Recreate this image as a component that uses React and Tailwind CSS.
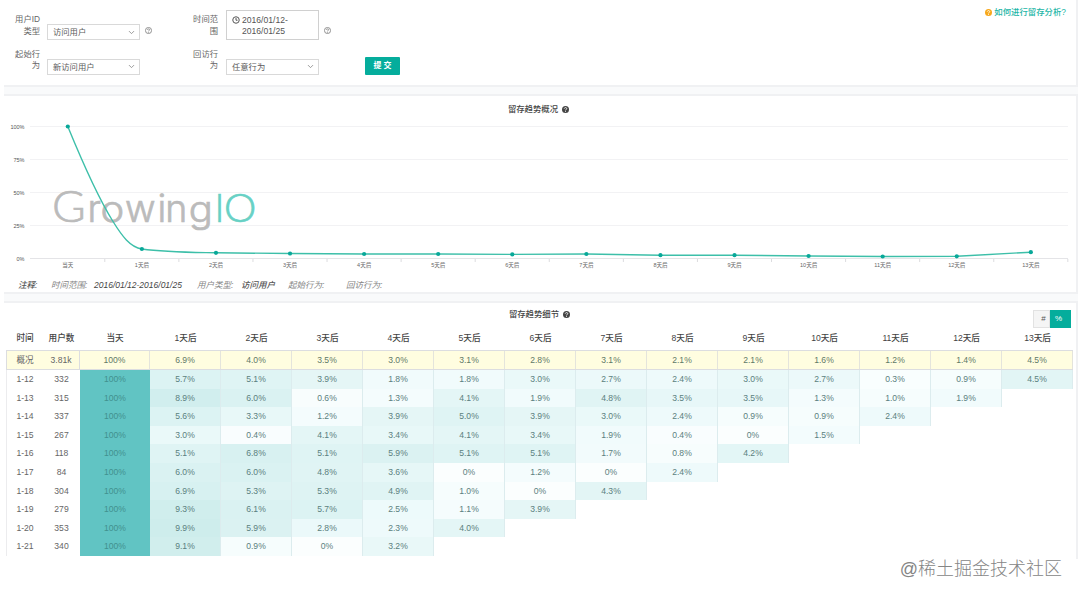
import React from "react";
import { ChevronDown } from "lucide-react";

const COLUMNS = ["当天", ...Array.from({ length: 13 }, (_, i) => `${i + 1}天后`)];

const OVERVIEW = ["100%", "6.9%", "4.0%", "3.5%", "3.0%", "3.1%", "2.8%", "3.1%", "2.1%", "2.1%", "1.6%", "1.2%", "1.4%", "4.5%"];

const ROWS = [
  ["1-12", "332", [5.7, 5.1, 3.9, 1.8, 1.8, 3.0, 2.7, 2.4, 3.0, 2.7, 0.3, 0.9, 4.5]],
  ["1-13", "315", [8.9, 6.0, 0.6, 1.3, 4.1, 1.9, 4.8, 3.5, 3.5, 1.3, 1.0, 1.9]],
  ["1-14", "337", [5.6, 3.3, 1.2, 3.9, 5.0, 3.9, 3.0, 2.4, 0.9, 0.9, 2.4]],
  ["1-15", "267", [3.0, 0.4, 4.1, 3.4, 4.1, 3.4, 1.9, 0.4, 0, 1.5]],
  ["1-16", "118", [5.1, 6.8, 5.1, 5.9, 5.1, 5.1, 1.7, 0.8, 4.2]],
  ["1-17", "84", [6.0, 6.0, 4.8, 3.6, 0, 1.2, 0, 2.4]],
  ["1-18", "304", [6.9, 5.3, 5.3, 4.9, 1.0, 0, 4.3]],
  ["1-19", "279", [9.3, 6.1, 5.7, 2.5, 1.1, 3.9]],
  ["1-20", "353", [9.9, 5.9, 2.8, 2.3, 4.0]],
  ["1-21", "340", [9.1, 0.9, 0, 3.2]],
];

const GRID = "grid grid-cols-[36px_37px_70px_repeat(13,71px)]";

const POINT_Y = [126.5, 249, 252.8, 253.5, 254, 254, 254.4, 254, 255.2, 255.2, 256, 256.5, 256.3, 252.2];
const pointX = (i) => 67.8 + i * 74.08;

function shade(v) {
  const stops = [[0, [251, 254, 254]], [2, [240, 251, 252]], [4, [228, 246, 246]], [6, [218, 242, 242]], [10, [206, 237, 236]]];
  for (let i = 1; i < stops.length; i++) {
    const [a, ca] = stops[i - 1];
    const [b, cb] = stops[i];
    if (v <= b) {
      const t = (v - a) / (b - a);
      return `rgb(${ca.map((c, k) => Math.round(c + (cb[k] - c) * t)).join(",")})`;
    }
  }
  return "rgb(206,237,236)";
}

const format = (v) => (v === 0 ? "0%" : `${v.toFixed(1)}%`);

function Help({ className }) {
  return (
    <svg viewBox="0 0 16 16" className={`shrink-0 ${className}`}>
      <circle cx="8" cy="8" r="8" fill="currentColor" />
      <path d="M5.300 6.100c.1-3.400 5.600-3.300 5.500-.1C10.800 8 8 8 8 10.100" fill="none" stroke="#fff" strokeWidth="2" />
      <path d="M8 11.300v2" stroke="#fff" strokeWidth="2" />
    </svg>
  );
}

function OutlineHelp() {
  return (
    <svg viewBox="0 0 16 16" className="size-[7px] shrink-0 text-[#858585]" fill="none" stroke="currentColor" strokeWidth="2">
      <circle cx="8" cy="8" r="7" />
      <path d="M5.500 6.500c.1-3 5-2.900 5 0C10.500 8 8 8 8 9.800M8 11v2" />
    </svg>
  );
}

function Label({ first, second }) {
  return (
    <div className="w-[30px] shrink-0 text-right text-[8.300px] leading-[11.500px] text-[#666]">
      <div>{first}</div>
      <div>{second}</div>
    </div>
  );
}

function Select({ children }) {
  return (
    <div className="flex h-[16px] w-[93px] items-center justify-between border border-[#d9d9d9] pl-[5px] pr-[3px] text-[8.300px] leading-none text-[#5c5c5c]">
      <span className="pt-[1px]">{children}</span>
      <ChevronDown className="size-[9px] text-[#888]" strokeWidth={2.2} />
    </div>
  );
}

function Filters() {
  return (
    <section className="flex h-[87px] border-b-2 border-r-2 border-[#f0f1f3] bg-white">
      <div className="w-[178px] pl-[6px]">
        <div className="flex h-[44px] pt-[14px]">
          <Label first="用户ID" second="类型" />
          <div className="ml-[7px] flex items-start gap-[5px] self-start pt-[10px]">
            <Select>访问用户</Select>
            <div className="pt-[3px]"><OutlineHelp /></div>
          </div>
        </div>
        <div className="flex pt-[4.500px]">
          <Label first="起始行" second="为" />
          <div className="ml-[7px] pt-[10px]"><Select>新访问用户</Select></div>
        </div>
      </div>
      <div className="w-[183px] pl-[6px]">
        <div className="flex h-[44px] pt-[10px]">
          <div className="pt-[4px]"><Label first="时间范" second="围" /></div>
          <div className="ml-[8px] flex h-[30px] w-[93px] items-center border border-[#d0d0d0] pl-[5px] text-[8.600px] leading-[11px] text-[#555]">
            <svg viewBox="0 0 16 16" className="mb-[10px] mr-[2px] size-[8px]" fill="none" stroke="currentColor" strokeWidth="2">
              <circle cx="8" cy="8" r="6.500" />
              <path d="M8 4v4.500h3" />
            </svg>
            <div className="pt-[1px]"><div>2016/01/12-</div><div>2016/01/25</div></div>
          </div>
          <div className="ml-[5px] pt-[17px]"><OutlineHelp /></div>
        </div>
        <div className="flex pt-[4.500px]">
          <Label first="回访行" second="为" />
          <div className="ml-[8px] pt-[10px]"><Select>任意行为</Select></div>
        </div>
      </div>
      <button className="mt-[57px] h-[18px] w-[35px] rounded-[1px] bg-[#05ad9c] text-[8px] font-bold leading-none text-white">提 交</button>
      <div className="ml-auto mr-[10px] mt-[7px] flex h-[10px] items-center gap-[2px] text-[8.400px] font-medium text-[#1bb5a6]">
        <Help className="size-[7px] text-[#f7a81b]" />
        如何进行留存分析?
      </div>
    </section>
  );
}

function Title({ children }) {
  return (
    <h2 className="flex h-[12px] items-center justify-center gap-[4px] pr-[3px] text-[8.400px] font-medium leading-none text-[#444]">
      {children}
      <Help className="size-[7px] text-[#444]" />
    </h2>
  );
}

function Wordmark() {
  return (
    <g strokeWidth="0.700" fontWeight="300">
      <g fill="#bbb" stroke="#bbb">
        <text transform="translate(52 221.500) scale(1.080 1)" fontSize="42.500" className="font-['Lato']">G</text>
        <text transform="translate(87.500 221.500)" fontSize="37.500" className="font-['Inter']">r</text>
        <text transform="translate(100.500 221.500) scale(1.080 1)" fontSize="37" className="font-['Inter']">o</text>
        <text transform="translate(125 221.500)" fontSize="37.500" className="font-['Inter']">w</text>
        <text transform="translate(157.500 221.500)" fontSize="37.500" className="font-['Inter']">i</text>
        <text transform="translate(165.300 221.500)" fontSize="37.500" className="font-['Inter']">n</text>
        <text transform="translate(188.700 221.500) scale(1.080 1)" fontSize="37" className="font-['Inter']">g</text>
      </g>
      <g fill="#67d1c5" stroke="#67d1c5">
        <text transform="translate(214.500 221.500)" fontSize="38.500" className="font-['Lato']">I</text>
        <text transform="translate(223.900 221.500) scale(1.060 1)" fontSize="38.500" className="font-['Lato']">O</text>
      </g>
    </g>
  );
}

function Chart() {
  const line = [
    `M${pointX(0)} ${POINT_Y[0]}`,
    `C84 166 99 199 113 221.500C122 236 130 247 ${pointX(1)} ${POINT_Y[1]}`,
    `C165 252.300 190 252.300 ${pointX(2)} ${POINT_Y[2]}`,
    ...POINT_Y.slice(3).map((y, i) => `L${pointX(i + 3)} ${y}`),
  ].join("");
  return (
    <svg viewBox="4 116 1072 158" className="block h-[158px] w-[1072px]">
      {[126.5, 159.5, 192.5, 225.5, 258.5].map((y, i) => (
        <g key={y}>
          <path d={`M30 ${y}H1068`} stroke={i === 4 ? "#e4e4e7" : "#f2f2f4"} />
          <text x="24.500" y={y + 2.2} textAnchor="end" fontSize="5.500" fill="#555">{`${100 - i * 25}%`}</text>
        </g>
      ))}
      {POINT_Y.map((_, i) => (
        <path key={i} d={`M${pointX(i) + 37} 259v3`} stroke="#dcdcdf" />
      ))}
      <Wordmark />
      <path d={line} fill="none" stroke="#3dbfa9" strokeWidth="1.400" />
      {POINT_Y.map((y, i) => (
        <g key={i}>
          <circle cx={pointX(i)} cy={y} r="2.100" fill="#08a899" />
          <text x={pointX(i)} y="267.300" textAnchor="middle" fontSize="5.500" fill="#666">{COLUMNS[i]}</text>
        </g>
      ))}
    </svg>
  );
}

function Trend() {
  return (
    <section className="h-[200px] border-y-2 border-r-2 border-[#f0f1f3] bg-white pt-[7px]">
      <Title>留存趋势概况</Title>
      <div className="h-[1px]" />
      <Chart />
      <div className="flex h-[18px] items-center pb-[1px] pl-[14px] pt-[5px] text-[8.500px] italic leading-none text-[#858585]">
        <span className="w-[33px] font-medium text-[#555]">注释:</span>
        <span className="w-[43px]">时间范围:</span>
        <span className="w-[103px] font-medium text-[#444]">2016/01/12-2016/01/25</span>
        <span className="w-[44px]">用户类型:</span>
        <span className="w-[47px] font-medium text-[#555]">访问用户</span>
        <span className="w-[58px]">起始行为:</span>
        <span>回访行为:</span>
      </div>
    </section>
  );
}

function Details() {
  return (
    <section className="relative h-[258px] border-r-2 border-t-2 border-[#f0f1f3] bg-white pl-[2px] pt-[5px] text-center text-[8.600px] leading-none">
      <Title>留存趋势细节</Title>
      <div className="absolute right-[5px] top-[7px] flex h-[18px] w-[38px] text-[8px]">
        <span className="flex w-[17px] items-center justify-center border border-[#e2e2e2] bg-[#f5f5f5] pl-[4px] text-[#555]">#</span>
        <span className="flex flex-1 items-center justify-center bg-[#05ad9c] pr-[4px] text-white">%</span>
      </div>
      <div className={`${GRID} h-[30px] items-center pl-[1px] pt-[6px] font-medium text-[#444]`}>
        <span>时间</span>
        <span>用户数</span>
        {COLUMNS.map((c) => <span key={c}>{c}</span>)}
      </div>
      <div className={`${GRID} h-[20px] w-[1067px] border-y border-l border-[#dcdde0] bg-[#fffde0] text-[#5f7a67]`}>
        <span className="flex items-center justify-center text-[#666]">概况</span>
        <span className="flex items-center justify-center border-r border-[#dcdde0] text-[#666]">3.81k</span>
        {OVERVIEW.map((v, i) => (
          <span key={i} className="flex items-center justify-center border-r border-[#e4e4dc] pt-[1px]">{v}</span>
        ))}
      </div>
      <div className="border-l border-[#ececee]">
        {ROWS.map(([date, users, values]) => (
          <div key={date} className={`${GRID} h-[18.600px]`}>
            <span className="flex items-center justify-center text-[#666]">{date}</span>
            <span className="flex items-center justify-center text-[#666]">{users}</span>
            <span className="flex items-center justify-center bg-[#61c4c3] text-[#41918f]">100%</span>
            {values.map((v, i) => (
              <span key={i} className="flex items-center justify-center border-r border-[#dcecee] text-[#5b8180]" style={{ backgroundColor: shade(v) }}>{format(v)}</span>
            ))}
          </div>
        ))}
      </div>
    </section>
  );
}

export default function App() {
  return (
    <main className="h-[597px] w-[1080px] overflow-hidden bg-white font-['Liberation_Sans','Noto_Sans_CJK_SC',sans-serif]">
      <div className="ml-[4px] flex w-[1074px] flex-col gap-[7px] bg-[#f9fafb]">
        <Filters />
        <Trend />
        <Details />
      </div>
      <footer className="flex h-[19px] items-center justify-end pr-[18px] text-[18px] font-light leading-none text-[#858585]">@稀土掘金技术社区</footer>
    </main>
  );
}
